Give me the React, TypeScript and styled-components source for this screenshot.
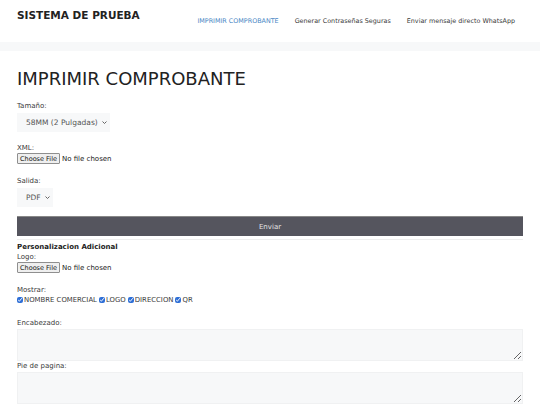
import React from "react";
import styled, { createGlobalStyle } from "styled-components";

const Global = createGlobalStyle`
  html, body { margin: 0; padding: 0; background: #f7f8f9; }
  body { font-family: "DejaVu Sans", "Liberation Sans", sans-serif; color: #222; }
  * { box-sizing: border-box; }
`;

const Header = styled.header`
  background: #fff;
  height: 42px;
  display: flex;
  align-items: flex-start;
  justify-content: space-between;
  padding: 0 17px;
`;

const Brand = styled.div`
  font-weight: bold;
  font-size: 10.5px;
  line-height: 13px;
  color: #222;
  padding-top: 9px;
`;

const Nav = styled.nav`
  display: flex;
  padding-top: 17px;
  margin-right: 0;
`;

const NavItem = styled.a<{ $active?: boolean }>`
  font-size: 6.4px;
  line-height: 8px;
  color: ${(p) => (p.$active ? "#4a87c5" : "#3a3a3a")};
  padding: 0 8px;
  text-decoration: none;
`;

const Content = styled.main`
  background: #fff;
  margin-top: 9px;
  padding: 17px 17px 10px;
`;

const Title = styled.h1`
  font-size: 18px;
  font-weight: normal;
  margin: 0 0 11px;
  color: #222;
  line-height: 22px;
`;

const Field = styled.div<{ $gap?: number }>`
  display: flex;
  flex-direction: column;
  align-items: flex-start;
  margin-bottom: ${(p) => p.$gap ?? 11}px;
`;

const Label = styled.label`
  display: block;
  font-size: 7px;
  color: #3a3a3a;
  line-height: 10px;
`;

const SelectWrap = styled.div`
  position: relative;
  display: inline-flex;
  margin-top: 2px;
`;

const Select = styled.select`
  appearance: none;
  font-family: "DejaVu Sans", sans-serif;
  font-size: 7.5px;
  color: #555;
  background: #f7f8f9;
  border: none;
  height: 19px;
  padding: 0 12px 0 9px;
  border-radius: 0;
  outline: none;
`;

const Chevron = styled.svg`
  position: absolute;
  right: 3px;
  top: 8px;
  width: 5px;
  height: 3px;
  pointer-events: none;
`;

const FileInput = styled.input`
  font-family: "DejaVu Sans", sans-serif;
  font-size: 7px;
  color: #222;
  height: 12px;
  &::file-selector-button {
    font-family: "DejaVu Sans", sans-serif;
    font-size: 6.5px;
    height: 11px;
    padding: 0 2px;
    margin: 0 2px 0 0;
    background: #efefef;
    border: 1px solid #8f8f8f;
    border-radius: 1px;
    color: #111;
  }
`;

const Button = styled.button`
  display: block;
  width: 100%;
  height: 20px;
  background: #55555e;
  color: #e4e4e4;
  border: none;
  border-top: 1px solid #888;
  font-family: "DejaVu Sans", sans-serif;
  font-size: 7px;
  margin: 9px 0 0;
`;

const Rule = styled.hr`
  border: none;
  height: 1px;
  background: #eeeeee;
  margin: 3px 0 2px;
`;

const Section = styled.div`
  font-size: 7px;
  font-weight: bold;
  color: #222;
  line-height: 10px;
  margin-top: 2px;
`;

const CheckRow = styled.div`
  display: flex;
  align-items: center;
  font-size: 6.9px;
  color: #3a3a3a;
  line-height: 10px;
`;

const Check = styled.input`
  width: 6px;
  height: 6px;
  margin: 0 1px 0 0;
  accent-color: #2f6fd6;
`;

const CheckLabel = styled.span`
  margin-right: 2px;
`;

const TextArea = styled.textarea`
  width: 100%;
  height: 32px;
  background: #f7f8f9;
  border: 1px solid #f0f1f2;
  margin: 1px 0 0;
  resize: vertical;
  display: block;
`;

function Dropdown({ options }: { options: string[] }) {
  return (
    <SelectWrap>
      <Select defaultValue={options[0]}>
        {options.map((o) => (
          <option key={o} value={o}>
            {o}
          </option>
        ))}
      </Select>
      <Chevron viewBox="0 0 5 3">
        <polyline points="0.5,0.5 2.5,2.5 4.5,0.5" fill="none" stroke="#555" strokeWidth="0.9" />
      </Chevron>
    </SelectWrap>
  );
}

export default function App() {
  return (
    <>
      <Global />
      <Header>
        <Brand>SISTEMA DE PRUEBA</Brand>
        <Nav>
          <NavItem $active>IMPRIMIR COMPROBANTE</NavItem>
          <NavItem>Generar Contraseñas Seguras</NavItem>
          <NavItem>Enviar mensaje directo WhatsApp</NavItem>
        </Nav>
      </Header>
      <Content>
        <Title>IMPRIMIR COMPROBANTE</Title>
        <Field>
          <Label>Tamaño:</Label>
          <Dropdown options={["58MM (2 Pulgadas)", "80MM (3 Pulgadas)"]} />
        </Field>
        <Field>
          <Label>XML:</Label>
          <FileInput type="file" />
        </Field>
        <Field $gap={0}>
          <Label>Salida:</Label>
          <Dropdown options={["PDF"]} />
        </Field>
        <Button>Enviar</Button>
        <Rule />
        <Section>Personalizacion Adicional</Section>
        <Field>
          <Label>Logo:</Label>
          <FileInput type="file" />
        </Field>
        <Field $gap={13}>
          <Label>Mostrar:</Label>
          <CheckRow>
            <Check type="checkbox" defaultChecked />
            <CheckLabel>NOMBRE COMERCIAL</CheckLabel>
            <Check type="checkbox" defaultChecked />
            <CheckLabel>LOGO</CheckLabel>
            <Check type="checkbox" defaultChecked />
            <CheckLabel>DIRECCION</CheckLabel>
            <Check type="checkbox" defaultChecked />
            <CheckLabel>QR</CheckLabel>
          </CheckRow>
        </Field>
        <Label>Encabezado:</Label>
        <TextArea />
        <Label>Pie de pagina:</Label>
        <TextArea />
      </Content>
    </>
  );
}
